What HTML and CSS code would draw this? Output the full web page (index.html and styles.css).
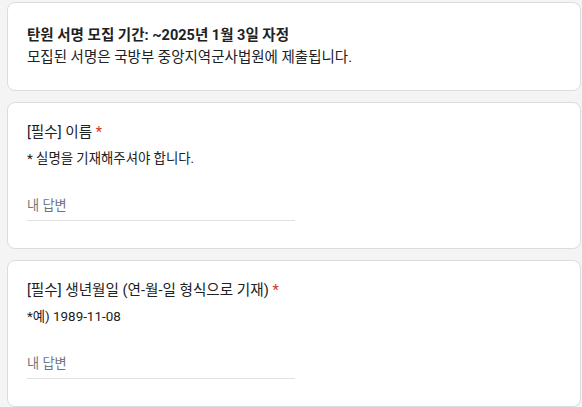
FILE: index.html
```html
<!DOCTYPE html>
<html lang="ko">
<head>
<meta charset="utf-8">
<link rel="stylesheet" href="styles.css">
</head>
<body>
<div class="page">
  <div class="card intro">
    <div class="intro-title">탄원 서명 모집 기간: ~2025년 1월 3일 자정</div>
    <div class="intro-desc">모집된 서명은 국방부 중앙지역군사법원에 제출됩니다.</div>
  </div>
  <div class="card question">
    <div class="q-title">[필수] 이름 <span class="req">*</span></div>
    <div class="q-help">* 실명을 기재해주셔야 합니다.</div>
    <div class="answer"><span class="placeholder">내 답변</span></div>
  </div>
  <div class="card question">
    <div class="q-title">[필수] 생년월일 (연-월-일 형식으로 기재) <span class="req">*</span></div>
    <div class="q-help">*예) 1989-11-08</div>
    <div class="answer"><span class="placeholder">내 답변</span></div>
  </div>
</div>
</body>
</html>
```

FILE: styles.css
```css
html, body {
  margin: 0;
  padding: 0;
  background: #f4f4f4;
  font-family: Roboto, "Noto Sans CJK KR", sans-serif;
  color: #202124;
  overflow: hidden;
}
.page {
  display: flex;
  flex-direction: column;
  gap: 11px;
  padding: 2px 1px 0 7px;
}
.card {
  background: #fff;
  border: 1px solid #dadce0;
  border-radius: 8px;
  padding: 0 19px;
}
.intro {
  height: 87px;
  display: flex;
  flex-direction: column;
  justify-content: center;
}
.intro-title {
  font-weight: 700;
  font-size: 14.5px;
  line-height: 22px;
}
.intro-desc {
  font-size: 14.5px;
  line-height: 22px;
}
.question {
  height: 147px;
  padding-top: 18px;
  box-sizing: border-box;
}
.q-title {
  font-size: 14.6px;
  line-height: 22px;
}
.req {
  color: #d93025;
}
.q-help {
  font-size: 13.4px;
  line-height: 20px;
  margin-top: 6px;
}
.answer {
  width: 268px;
  border-bottom: 1px solid #e0e0e0;
  margin-top: 26px;
  padding-bottom: 4px;
}
.placeholder {
  font-size: 13.2px;
  line-height: 20px;
  color: #70757a;
}
```
